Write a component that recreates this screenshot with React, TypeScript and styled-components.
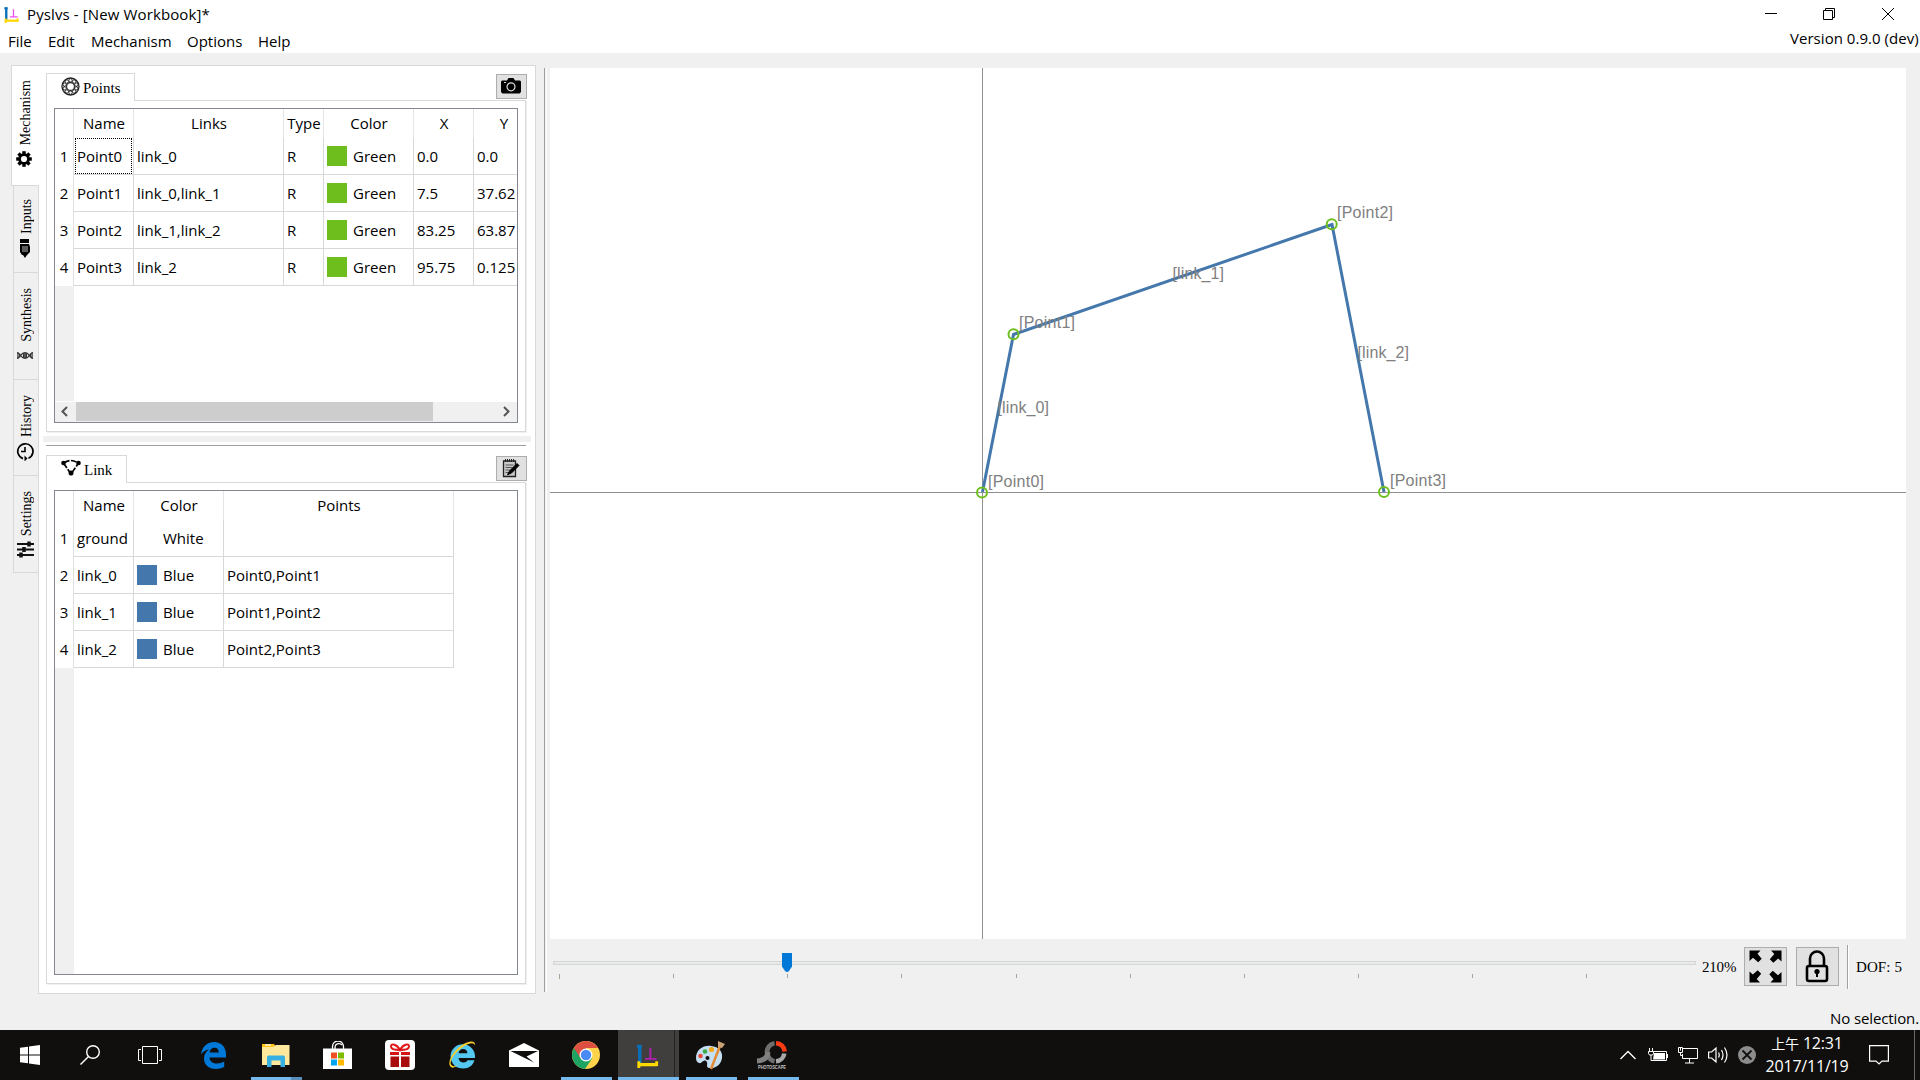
import React from "react";
import styled, { createGlobalStyle, css } from "styled-components";

const GlobalStyle = createGlobalStyle`
  * { box-sizing: border-box; }
  html, body { margin: 0; padding: 0; }
  body { width: 1920px; height: 1080px; overflow: hidden; background: #f0f0f0; }
  svg { display: block; flex: none; }
`;

const uiFont = css`
  font-family: "Open Sans", "Noto Sans", sans-serif;
  font-size: 15px;
  color: #000;
  white-space: nowrap;
`;
const serifFont = css`
  font-family: "Liberation Serif", serif;
  font-size: 15px;
  color: #000;
  white-space: nowrap;
`;

const Window = styled.div`
  width: 1920px;
  height: 1080px;
  display: flex;
  flex-direction: column;
  background: #f0f0f0;
  overflow: hidden;
`;
const Top = styled.header`
  height: 53px;
  background: #fff;
  display: flex;
  justify-content: space-between;
  ${uiFont}
`;
const TopLeft = styled.div`
  display: flex;
  flex-direction: column;
`;
const TitleRow = styled.div`
  display: flex;
  height: 30px;
  align-items: center;
  padding: 0 0 2px 3px;
  gap: 7px;
`;
const Txt = styled.span<{ $ls?: number }>`
  letter-spacing: ${(p) => p.$ls ?? 0}px;
`;
const Menu = styled.nav`
  display: flex;
  height: 23px;
  line-height: 22px;
  padding-left: 8px;
`;
const MenuItem = styled.span<{ $w: number }>`
  width: ${(p) => p.$w}px;
`;
const TopRight = styled.div`
  width: 200px;
  display: flex;
  flex-direction: column;
`;
const Controls = styled.div`
  height: 28px;
  display: flex;
  padding: 8px 0 0 45px;
  gap: 46px;
`;
const Version = styled.div`
  padding-left: 70px;
  line-height: 21px;
  letter-spacing: 0.04px;
`;

const Body = styled.main`
  flex: 1;
  display: flex;
  padding-top: 12px;
`;
const SideTabs = styled.div`
  width: 38px;
  padding-left: 11px;
  display: flex;
  flex-direction: column;
  align-items: flex-end;
`;
const SideTab = styled.div<{ $h: number; $active?: boolean; $b: number; $gap: number }>`
  position: relative;
  z-index: 1;
  width: ${(p) => (p.$active ? 28 : 25)}px;
  height: ${(p) => p.$h}px;
  margin-right: ${(p) => (p.$active ? -1 : 0)}px;
  background: ${(p) => (p.$active ? "#fff" : "#f0f0f0")};
  border: 1px solid #d9d9d9;
  border-right: 0;
  border-top-width: ${(p) => (p.$active ? 1 : 0)}px;
  display: flex;
  flex-direction: column;
  align-items: center;
  justify-content: flex-end;
  gap: ${(p) => p.$gap}px;
  padding-bottom: ${(p) => p.$b}px;
  padding-right: ${(p) => (p.$active ? 3 : 2)}px;
`;
const VText = styled.span<{ $ls?: number }>`
  ${serifFont}
  font-size: 14px;
  writing-mode: vertical-rl;
  transform: rotate(180deg);
  line-height: 18px;
  margin-left: 3px;
  letter-spacing: ${(p) => p.$ls ?? 0}px;
`;
const Pane = styled.section`
  width: 498px;
  height: 929px;
  background: #fff;
  border: 1px solid #d9d9d9;
  padding: 7px 4px 0;
  display: flex;
  flex-direction: column;
`;
const Group = styled.div`
  width: 482px;
  margin-left: 3px;
`;
const TabRow = styled.div`
  height: 28px;
  display: flex;
  justify-content: space-between;
`;
const Tab = styled.div<{ $w: number }>`
  position: relative;
  z-index: 1;
  width: ${(p) => p.$w}px;
  height: 28px;
  background: #fff;
  border: 1px solid #d9d9d9;
  border-bottom: 0;
  display: flex;
  align-items: flex-start;
  padding: 3px 0 0 14px;
  gap: 3px;
  ${serifFont}
  line-height: 23px;
`;
const ToolButton = styled.div`
  position: relative;
  z-index: 1;
  width: 31px;
  height: 25px;
  margin: 1px 1px 0 0;
  padding: 0 1px 1px 0;
  background: #e1e1e1;
  border: 1px solid #adadad;
  display: grid;
  place-items: center;
`;
const Frame = styled.div<{ $h: number }>`
  width: 480px;
  height: ${(p) => p.$h}px;
  margin-top: -1px;
  border: 1px solid #d9d9d9;
  box-shadow: 1px 1px 0 0 #f0f0f0;
  padding: 7px;
  background: #fff;
`;
const TableBox = styled.div<{ $h: number }>`
  width: 464px;
  height: ${(p) => p.$h}px;
  border: 1px solid #828790;
  display: flex;
  flex-direction: column;
  overflow: hidden;
  ${uiFont}
`;
const Row = styled.div<{ $h: number }>`
  display: flex;
  flex: none;
  height: ${(p) => p.$h}px;
`;
const Num = styled.div`
  flex: none;
  width: 19px;
  border-right: 1px solid #e0e0e0;
  padding-bottom: 1px;
  display: flex;
  align-items: center;
  justify-content: center;
`;
const Cell = styled.div<{ $w: number; $head?: boolean }>`
  flex: none;
  width: ${(p) => p.$w}px;
  border-right: 1px solid ${(p) => (p.$head ? "#e5e5e5" : "#d8d8d8")};
  border-bottom: ${(p) => (p.$head ? "0" : "1px solid #d8d8d8")};
  display: flex;
  align-items: center;
  justify-content: ${(p) => (p.$head ? "center" : "flex-start")};
  padding-left: ${(p) => (p.$head ? 1 : 3)}px;
  padding-bottom: ${(p) => (p.$head ? 1 : 0)}px;
`;
const Focus = styled.div`
  display: flex;
  align-items: center;
  flex: none;
  width: 57px;
  height: 36px;
  margin-left: -2px;
  padding-left: 1px;
  border: 1px dotted #000;
`;
const Swatch = styled.span<{ $c: string }>`
  width: 20px;
  height: 20px;
  margin: -1px 6px 0 0;
  background: ${(p) => p.$c};
`;
const HeaderFill = styled.div`
  flex: 1;
  width: 19px;
  background: #f0f0f0;
`;
const ScrollBar = styled.div`
  height: 20px;
  margin-top: 1px;
  background: #f0f0f0;
  display: flex;
  align-items: center;
  padding: 0 6px 1px;
`;
const Thumb = styled.div`
  width: 357px;
  height: 19px;
  margin: 0 70px 0 8px;
  background: #cdcdcd;
`;
const HSplit = styled.div`
  height: 6px;
  margin: 4px 0 3px;
  background: #f0f0f0;
`;
const HLine = styled.div`
  height: 1px;
  width: 480px;
  margin: 0 0 9px 3px;
  background: #a0a0a0;
`;
const VSplit = styled.div`
  width: 3px;
  height: 924px;
  margin: 3px 3px 0 8px;
  border-left: 1px solid #a0a0a0;
  border-right: 1px solid #fff;
`;
const Right = styled.section`
  flex: 1;
  padding-top: 3px;
  display: flex;
  flex-direction: column;
`;
const Canvas = styled.svg`
  width: 1356px;
  height: 871px;
  background: #fff;
`;
const ZoomRow = styled.div`
  height: 53px;
  display: flex;
  align-items: flex-start;
  padding: 6px 0 0 3px;
  ${serifFont}
`;
const Label = styled.span<{ $w: number; $ls?: number }>`
  width: ${(p) => p.$w}px;
  line-height: 44px;
  letter-spacing: ${(p) => p.$ls ?? 0}px;
`;
const BigButton = styled.div`
  width: 43px;
  height: 39px;
  margin: 2px 9px 0 0;
  padding-right: 1px;
  background: #e1e1e1;
  border: 1px solid #adadad;
  display: grid;
  place-items: center;
`;
const Divider = styled.div`
  width: 2px;
  height: 44px;
  margin: 0 7px 0 -1px;
  border-left: 1px solid #a0a0a0;
  border-right: 1px solid #fff;
`;
const Status = styled.div`
  flex: 1;
  display: flex;
  justify-content: flex-end;
  align-items: center;
  padding: 13px 1px 0 0;
  letter-spacing: -0.12px;
  ${uiFont}
`;
const Taskbar = styled.footer`
  height: 50px;
  background: #100f0e;
  display: flex;
  justify-content: space-between;
`;
const Tasks = styled.div`
  display: flex;
`;
const Task = styled.div<{ $w: number; $ml?: number; $open?: boolean; $active?: boolean; $multi?: boolean }>`
  width: ${(p) => p.$w}px;
  margin-left: ${(p) => p.$ml ?? 0}px;
  height: 50px;
  display: flex;
  flex-direction: column;
  align-items: center;
  background: ${(p) =>
    p.$active ? "linear-gradient(90deg,#403f3e 0 56px,#222 56px 57px,#403f3e 57px)" : "none"};
  &::after {
    content: "";
    height: 3px;
    width: ${(p) => (p.$active ? "100%" : "51px")};
    background: ${(p) =>
      p.$multi ? "linear-gradient(90deg,#76b9ed 0 40px,#5a8fb9 40px)" : p.$open ? "#76b9ed" : "none"};
  }
`;
const TaskIcon = styled.div<{ $shift?: number }>`
  height: 47px;
  display: grid;
  place-items: center;
  padding: 3px ${(p) => p.$shift ?? 0}px 0 0;
`;
const Tray = styled.div`
  display: flex;
  align-items: center;
  width: 302px;
`;
const TrayIcon = styled.div<{ $w: number }>`
  flex: none;
  width: ${(p) => p.$w}px;
  display: grid;
  place-items: center;
`;
const Clock = styled.div`
  flex: none;
  width: 88px;
  margin: 0 0 2px 7px;
  text-align: center;
  color: #fff;
  white-space: nowrap;
  font: 16px/22px "Open Sans", "Noto Sans CJK TC", sans-serif;
  letter-spacing: -0.2px;
`;
const Meridiem = styled.span`
  font-size: 14px;
`;
const Peek = styled.div`
  width: 6px;
  height: 50px;
  margin-left: 7px;
  border-left: 1px solid #6a6a6a;
`;

const Logo = ({ s, p = "#d81bd8" }: { s: number; p?: string }) => (
  <svg width={s} height={s} viewBox="0 0 24 26">
    <path d="M4 2v19" stroke="#0870b8" strokeWidth="3.600" />
    <path d="M1 3.500h5" stroke="#0870b8" strokeWidth="3" />
    <path d="M2 22.500h20" stroke="#ffd800" strokeWidth="3.400" />
    <path d="M3 19v7M21.500 19v5" stroke="#ffd800" strokeWidth="3" />
    <path d="M15 5v12M9.500 16.500h12" stroke={p} strokeWidth="2" />
  </svg>
);

const GearIcon = () => (
  <svg width="16" height="16" viewBox="-8 -8 16 16">
    {[0, 45, 90, 135].map((a) => (
      <rect key={a} x="-1.700" y="-7.800" width="3.400" height="15.600" transform={`rotate(${a})`} />
    ))}
    <circle r="5.800" />
    <circle r="3.100" fill="#fff" />
  </svg>
);
const PencilIcon = () => (
  <svg width="12" height="19" viewBox="0 0 12 19">
    <path d="M1 0h9v4H1zM1 5h9l1 3v5l-3 3H3l-2-3z" />
    <path d="M4 7v6M6 7v6M8 7v6" stroke="#bbb" />
    <path d="M4 16l2 3 2-3z" />
  </svg>
);
const DnaIcon = () => (
  <svg width="16" height="9" viewBox="0 0 17 9" fill="none" stroke="#333" strokeWidth="1.300">
    <path d="M0 1.500C3 1.500 4 7.500 8.500 7.500S14 1.500 17 1.500M0 7.500C3 7.500 4 1.500 8.500 1.500S14 7.500 17 7.500" />
    <path d="M1 1v7M2.800 2.500v4M7 2v5.500M8.500 1.500v6M10 2v5.500M14.200 2.500v4M16 1v7" />
  </svg>
);
const HistoryIcon = () => (
  <svg width="18" height="19" viewBox="0 0 18 19" fill="none" stroke="#000">
    <path d="M7 16.600A7.600 7.600 0 1 1 12.500 16.300" strokeWidth="1.700" />
    <path d="M9 5v5M9.700 9.500H5" strokeWidth="1.600" />
    <path d="M8.500 13.500l3 3-3 3z" fill="#000" stroke="none" />
  </svg>
);
const SlidersIcon = () => (
  <svg width="17" height="17" viewBox="0 0 17 17" stroke="#111">
    <path d="M0 3h17M0 8.500h17M0 14h17" strokeWidth="2" />
    <path d="M12 .5v5M7 6v5M4 11.500v5" strokeWidth="3.500" />
  </svg>
);
const BearingIcon = () => (
  <svg width="19" height="19" viewBox="-9.500 -9.500 19 19" fill="none" stroke="#222">
    <circle r="8.500" strokeWidth="1.300" />
    <circle r="3.900" strokeWidth="1.100" />
    {Array.from({ length: 10 }, (_, i) => (
      <circle key={i} cx="0" cy="-6.200" r="1.700" strokeWidth=".9" transform={`rotate(${i * 36})`} />
    ))}
  </svg>
);
const LinkIcon = () => (
  <svg width="20" height="17" viewBox="0 0 20 17">
    <path d="M3 4Q10-1 17 4M2.500 4L10 15 17.500 4" fill="none" stroke="#000" strokeWidth="1.700" strokeDasharray="6 1.500" />
    <circle cx="2.500" cy="4" r="2.300" />
    <circle cx="17.500" cy="4" r="2.300" />
    <circle cx="10" cy="14" r="2.500" />
  </svg>
);
const CameraIcon = () => (
  <svg width="20" height="16" viewBox="0 0 20 16">
    <path d="M1 2.500h5L7.500 0h5L14 2.500h5l1 1V14l-1.500 1.500h-17L0 14V3.500z" />
    <circle cx="10" cy="8.800" r="4" fill="none" stroke="#ddd" strokeWidth="1.200" />
    <path d="M3 4.500h2" stroke="#ddd" />
  </svg>
);
const EditIcon = () => (
  <svg width="18" height="19" viewBox="0 0 18 19">
    <path d="M1.500 2h12v15.500h-12z" fill="#c9c9c9" stroke="#222" strokeWidth="1.300" />
    <path d="M3.500 0v3M5.500 0v3M7.500 0v3M9.500 0v3M11.500 0v3" stroke="#222" />
    <path d="M3.500 6h8M3.500 8.500h7M3.500 11h5M3.500 13.500h3" stroke="#555" />
    <path d="M15 4.500l2 2L9.500 14l-4 1.800L7.500 12z" stroke="#000" />
  </svg>
);
const ExpandIcon = () => (
  <svg width="33" height="33" viewBox="-16.500 -16.500 33 33">
    {[0, 90, 180, 270].map((a) => (
      <path key={a} transform={`rotate(${a})`} d="M-16-16h11l-3 3.300 4.200 4.900-3.500 3.500-5.200-4.500-3.500 3.300z" />
    ))}
  </svg>
);
const LockIcon = () => (
  <svg width="24" height="33" viewBox="0 0 24 33" fill="none" stroke="#000" strokeWidth="2.600">
    <rect x="2" y="16" width="20" height="15" rx="2" />
    <path d="M5 16V8.500a7 7 0 0 1 14 0V16" />
    <circle cx="12" cy="21.500" r="2.600" fill="#000" stroke="none" />
    <path d="M12 22v5" strokeWidth="2" />
  </svg>
);

const GREEN = "#6ebe1e";
const BLUE = "#4478ad";

const pointCols: [string, number][] = [["Name", 60], ["Links", 150], ["Type", 40], ["Color", 90], ["X", 60], ["Y", 60]];
const points = [
  ["Point0", "link_0", "0.0", "0.0"],
  ["Point1", "link_0,link_1", "7.5", "37.62"],
  ["Point2", "link_1,link_2", "83.25", "63.87"],
  ["Point3", "link_2", "95.75", "0.125"],
];
const linkCols: [string, number][] = [["Name", 60], ["Color", 90], ["Points", 230]];
const links = [
  ["ground", "White", ""],
  ["link_0", "Blue", "Point0,Point1"],
  ["link_1", "Blue", "Point1,Point2"],
  ["link_2", "Blue", "Point2,Point3"],
];
const labels: [string, number, number, number][] = [
  ["[Point0]", 438, 419, 56],
  ["[Point1]", 469, 260, 56],
  ["[Point2]", 787, 150, 56],
  ["[Point3]", 840, 418, 56],
  ["[link_0]", 447.500, 345, 51.500],
  ["[link_1]", 622.500, 211, 51.500],
  ["[link_2]", 807.500, 290, 51.500],
];
const joints = [[432, 424.500], [463.500, 266.300], [781.700, 156.200], [834, 424]];

const Arrow = ({ d }: { d: string }) => (
  <svg width="7" height="11" viewBox="0 0 7 11" fill="none" stroke="#555" strokeWidth="2">
    <path d={d} />
  </svg>
);

const Drawing = () => (
  <Canvas viewBox="0 0 1356 871">
    <path d="M432.500 0V871M0 424.500H1356" stroke="#909090" shapeRendering="crispEdges" />
    <path d="M432.500 424L463.500 266.500 782 156.500 834 424" fill="none" stroke={BLUE} strokeWidth="3" />
    {joints.map(([x, y]) => (
      <circle key={x} cx={x} cy={y} r="5" fill="none" stroke={GREEN} strokeWidth="2" />
    ))}
    {labels.map(([t, x, y, w]) => (
      <text key={t} x={x} y={y} textLength={w} fontFamily="Liberation Sans, Arial, sans-serif" fontSize="16" fill="#808080">
        {t}
      </text>
    ))}
  </Canvas>
);

const Slider = () => (
  <svg width="1149" height="40" viewBox="0 0 1149 40">
    <rect x=".5" y="16.500" width="1142" height="3" fill="#e7eaea" stroke="#d6d6d6" />
    {Array.from({ length: 10 }, (_, i) => (
      <rect key={i} x={Math.round(6 + i * 114.150)} y="29" width="1" height={i === 0 ? 5 : 4} fill="#a5a593" />
    ))}
    <path d="M229 8h10v13.500l-3 4.500q-2 2-4 0L229 21.500z" fill="#0078d7" />
  </svg>
);

export default function App() {
  return (
    <Window>
      <GlobalStyle />
      <Top>
        <TopLeft>
          <TitleRow>
            <Logo s={17} p="#f050f0" />
            <Txt $ls={0.12}>Pyslvs - [New Workbook]*</Txt>
          </TitleRow>
          <Menu>
            <MenuItem $w={40}>File</MenuItem>
            <MenuItem $w={43}>Edit</MenuItem>
            <MenuItem $w={96}>Mechanism</MenuItem>
            <MenuItem $w={71}>Options</MenuItem>
            <MenuItem $w={50}>Help</MenuItem>
          </Menu>
        </TopLeft>
        <TopRight>
          <Controls>
            <svg width="12" height="12" viewBox="0 0 12 12" stroke="#000"><path d="M0 5.500h12" /></svg>
            <svg width="12" height="12" viewBox="0 0 12 12" stroke="#000" fill="none"><path d="M.5 2.500h9v9h-9zM2.500 2.500v-2h9v9h-2" /></svg>
            <svg width="13" height="12" viewBox="0 0 13 12" stroke="#000"><path d="M1 0l12 12M13 0L1 12" /></svg>
          </Controls>
          <Version>Version 0.9.0 (dev)</Version>
        </TopRight>
      </Top>

      <Body>
        <SideTabs>
          <SideTab $h={121} $active $b={18} $gap={6}><VText>Mechanism</VText><GearIcon /></SideTab>
          <SideTab $h={87} $b={14} $gap={5}><VText>Inputs</VText><PencilIcon /></SideTab>
          <SideTab $h={107} $b={19} $gap={9}><VText>Synthesis</VText><DnaIcon /></SideTab>
          <SideTab $h={96} $b={14} $gap={5}><VText>History</VText><HistoryIcon /></SideTab>
          <SideTab $h={97} $b={14} $gap={5}><VText>Settings</VText><SlidersIcon /></SideTab>
        </SideTabs>
        <Pane>
          <Group>
            <TabRow>
              <Tab $w={89}><BearingIcon />Points</Tab>
              <ToolButton><CameraIcon /></ToolButton>
            </TabRow>
            <Frame $h={332}>
              <TableBox $h={315}>
                <Row $h={29}>
                  <Num />
                  {pointCols.map(([t, w]) => <Cell key={t} $w={w} $head>{t}</Cell>)}
                </Row>
                {points.map((r, i) => (
                  <Row $h={37} key={r[0]}>
                    <Num>{i + 1}</Num>
                    <Cell $w={60}>{i === 0 ? <Focus>{r[0]}</Focus> : r[0]}</Cell>
                    <Cell $w={150}>{r[1]}</Cell>
                    <Cell $w={40}>R</Cell>
                    <Cell $w={90}><Swatch $c={GREEN} />Green</Cell>
                    <Cell $w={60}>{r[2]}</Cell>
                    <Cell $w={60}>{r[3]}</Cell>
                  </Row>
                ))}
                <HeaderFill />
                <ScrollBar>
                  <Arrow d="M6 1L1.500 5.500 6 10" />
                  <Thumb />
                  <Arrow d="M1 1l4.500 4.500L1 10" />
                </ScrollBar>
              </TableBox>
            </Frame>
          </Group>
          <HSplit />
          <HLine />
          <Group>
            <TabRow>
              <Tab $w={81}><LinkIcon />Link</Tab>
              <ToolButton><EditIcon /></ToolButton>
            </TabRow>
            <Frame $h={502}>
              <TableBox $h={485}>
                <Row $h={29}>
                  <Num />
                  {linkCols.map(([t, w]) => <Cell key={t} $w={w} $head>{t}</Cell>)}
                </Row>
                {links.map((r, i) => (
                  <Row $h={37} key={r[0]}>
                    <Num>{i + 1}</Num>
                    <Cell $w={60}>{r[0]}</Cell>
                    <Cell $w={90}><Swatch $c={i ? BLUE : "#fff"} />{r[1]}</Cell>
                    <Cell $w={230}>{r[2]}</Cell>
                  </Row>
                ))}
                <HeaderFill />
              </TableBox>
            </Frame>
          </Group>
        </Pane>
        <VSplit />
        <Right>
          <Drawing />
          <ZoomRow>
            <Slider />
            <Label $w={42} $ls={-0.2}>210%</Label>
            <BigButton><ExpandIcon /></BigButton>
            <BigButton><LockIcon /></BigButton>
            <Divider />
            <Label $w={50} $ls={0.1}>DOF: 5</Label>
          </ZoomRow>
          <Status>No selection.</Status>
        </Right>
      </Body>

      <Taskbar>
        <Tasks>
          <Task $w={60}><TaskIcon>
            <svg width="20" height="20" viewBox="0 0 20 20" fill="#fff"><path d="M0 2.800l8-1.100V9.500H0zM9 1.500L20 0v9.500H9zM0 10.500h8v7.800l-8-1.100zM9 10.500h11V20L9 18.500z" /></svg>
          </TaskIcon></Task>
          <Task $w={60}><TaskIcon>
            <svg width="20" height="20" viewBox="0 0 20 20" fill="none" stroke="#fff" strokeWidth="1.400"><circle cx="13" cy="7" r="6.300" /><path d="M8.500 11.500L.5 19.500" /></svg>
          </TaskIcon></Task>
          <Task $w={60}><TaskIcon>
            <svg width="24" height="18" viewBox="0 0 24 18" fill="none" stroke="#fff"><path d="M4.500.5h15v17h-15zM3 3.500H.5v11H3M21 3.500h2.500v11H21" /></svg>
          </TaskIcon></Task>
          <Task $w={62} $ml={3}><TaskIcon $shift={1}>
            <svg width="25" height="27" viewBox="0 0 25 27" fill="#0078d7"><path d="M0 12.500C.8 5 6 0 13 0c7.500 0 12 5.500 12 12v3.500H8.500c.3 4 3.500 6 7.500 6 2.700 0 5-.8 7.200-2V25c-2.500 1.300-5.200 2-8.200 2C7.500 27 3 22.500 3 16.500c0-3.700 2-7 5.200-9C4.500 8 1.800 9.700 0 12.500zM8.600 10.500h9.200c0-3-1.600-4.700-4.300-4.700-2.600 0-4.500 1.900-4.900 4.700z" /></svg>
          </TaskIcon></Task>
          <Task $w={62} $open $multi><TaskIcon>
            <svg width="28" height="24" viewBox="0 0 28 24"><path d="M0 1h12l2 3H0z" fill="#fcc419" /><path d="M0 4h11l3-2h13.500v20H0z" fill="#ffe79b" /><path d="M3 2h6" stroke="#fff" strokeWidth="1.200" /><path d="M5 24V14q0-1.500 1.500-1.500h15q1.500 0 1.500 1.500v10h-4.500v-6.500h-9V24z" fill="#36b0e3" /></svg>
          </TaskIcon></Task>
          <Task $w={62}><TaskIcon $shift={1}>
            <svg width="29" height="28" viewBox="0 0 29 28"><path d="M9.500 8V5.500a5.500 5.500 0 0 1 11 0V8M12 8V6a4 4 0 0 1 7-2" stroke="#fff" strokeWidth="1.300" fill="none" /><path d="M0 7.500h29V28H0z" fill="#fff" /><path d="M8 11.500h6v6H8z" fill="#f25022" /><path d="M15 11.500h6v6h-6z" fill="#7fba00" /><path d="M8 18.500h6v6H8z" fill="#00a4ef" /><path d="M15 18.500h6v6h-6z" fill="#ffb900" /></svg>
          </TaskIcon></Task>
          <Task $w={62}><TaskIcon>
            <svg width="30" height="30" viewBox="0 0 30 30"><rect width="30" height="30" rx="4" fill="#fff" /><path d="M5 12h9v3H5zM16 12h9v3h-9z" fill="#d31515" /><path d="M5.500 16.500H14V27H5.500zM16 16.500h8.500V27H16z" fill="#a80c0c" /><path d="M15 10C12 4 6 3 6 6.500S12 10 15 10s9 0 9-3.500S18 4 15 10z" fill="none" stroke="#e01818" strokeWidth="2" /></svg>
          </TaskIcon></Task>
          <Task $w={62}><TaskIcon $shift={1}>
            <svg width="30" height="30" viewBox="0 0 30 30"><path d="M3.500 15.500A12.300 12.300 0 0 1 28 15.500V18H11.500c.4 3.300 2.500 4.500 5 4.500 2 0 3.300-.8 4-2.200h7C25.800 25.500 22 28.500 16.500 28.500 9 28.500 3.500 24 3.500 15.500zM11.500 13.300h9c-.3-2.800-1.900-4.300-4.400-4.300-2.600 0-4.200 1.600-4.600 4.300z" fill="#54c8f0" /><path d="M4 27C-1 23 6 11 15 5 22 .5 29 0 28 6c-.2-4-5-3.500-11.500.5C8 12 2 21 4 24.500q2 3 7 .5Q6 29 4 27z" fill="#f8cf28" /></svg>
          </TaskIcon></Task>
          <Task $w={62}><TaskIcon>
            <svg width="30" height="24" viewBox="0 0 30 24"><path d="M0 7.500L15 0l15 7.500V24H0z" fill="#fff" /><path d="M1.500 8h27.500L17.500 13.500 25 19.500z" fill="#100f0e" /></svg>
          </TaskIcon></Task>
          <Task $w={62} $open><TaskIcon $shift={1}>
            <svg width="28" height="28" viewBox="-14 -14 28 28"><circle r="14" fill="#ffd24c" /><path d="M-12.100-7A14 14 0 0 0-1 14L6 3.500 0 0z" fill="#1da462" /><path d="M-12.100-7L-5.500 3 0 0 0-7H12.100A14 14 0 0 0-12.100-7z" fill="#dd4f43" /><circle r="6.500" fill="#fff" /><circle r="5.200" fill="#4a8af4" /></svg>
          </TaskIcon></Task>
          <Task $w={61} $ml={1} $open $active><TaskIcon $shift={2}><Logo s={25} p="#b020b0" /></TaskIcon></Task>
          <Task $w={62} $ml={1} $open><TaskIcon $shift={2}>
            <svg width="30" height="29" viewBox="0 0 30 29"><path d="M1 17C1 9 8 4 16 5c8 .5 12 6 11 12-1 7-7 11-13 10-4-1 0-5-3-7s-4 3-7 2q-3-1-3-5z" fill="#c4dff2" /><circle cx="5.500" cy="15" r="2.300" fill="#e84b38" /><circle cx="10" cy="10.500" r="2.300" fill="#3caa46" /><circle cx="16.500" cy="8.500" r="2.600" fill="#f7a81b" /><circle cx="12.500" cy="17" r="2" fill="#100f0e" /><path d="M25 5L16 28" stroke="#e28a35" strokeWidth="2.500" /><path d="M23 0l7 3-3 4-4-1z" fill="#c9a27a" /></svg>
          </TaskIcon></Task>
          <Task $w={62} $open><TaskIcon $shift={2}>
            <svg width="32" height="32" viewBox="-1 -1 32 32" fill="none">
              <path d="M19 3.200a8.800 8.800 0 0 1 8.700 8.300" stroke="#ff3b14" strokeWidth="4.600" />
              <path d="M27.300 13.500A9 9 0 0 1 19 21.300" stroke="#a8a8a8" strokeWidth="4.600" />
              <path d="M17.500 3.200A9 9 0 0 0 10.500 15Q13 20.500 17.500 21.300" stroke="#6e6e6e" strokeWidth="4.600" />
              <path d="M11 12Q10.500 20.500 0 21" stroke="#808080" strokeWidth="5" />
              <text x="1" y="29" textLength="28" lengthAdjust="spacingAndGlyphs" fontFamily="Liberation Sans" fontWeight="700" fontSize="5.500" fill="#c4c4c4">PHOTOSCAPE</text>
            </svg>
          </TaskIcon></Task>
        </Tasks>
        <Tray>
          <TrayIcon $w={20}><svg width="16" height="10" viewBox="0 0 16 10" fill="none" stroke="#fff" strokeWidth="1.300"><path d="M.5 9L8 1.500 15.500 9" /></svg></TrayIcon>
          <TrayIcon $w={40}><svg width="20" height="14" viewBox="0 0 20 14"><path d="M5.500 3.500h13v9h-13" stroke="#fff" fill="none" /><path d="M6 5h11v6.500H5zM18.500 6H20v4h-1.500z" fill="#fff" /><path d="M1.500 0v3M4.500 0v3M.5 3.500h5v2l-1 1.500h-3L.5 5.500zM3 7v5.500h3" stroke="#fff" fill="none" /></svg></TrayIcon>
          <TrayIcon $w={20}><svg width="20" height="17" viewBox="0 0 20 17" fill="none" stroke="#fff"><path d="M5 1.500h14.500v10h-15V7M.5.500h4v5h-4zM2.500 6v2.500H5M11.500 12v4M7 16h9M2.500.5v3" /></svg></TrayIcon>
          <TrayIcon $w={40}><svg width="20" height="18" viewBox="0 0 20 18" fill="none" stroke="#fff" strokeWidth="1.200"><path d="M.6 6h3L8 2v14L3.600 12h-3zM10.500 6.500q1.500 2.500 0 5M13.500 4q3 5 0 10M16.500 1.500q5 7.500 0 15" /></svg></TrayIcon>
          <TrayIcon $w={18}><svg width="18" height="18" viewBox="0 0 18 18"><circle cx="9" cy="9" r="9" fill="#8c8c8c" /><path d="M4.500 4.500l9 9M13.500 4.500l-9 9" stroke="#111" strokeWidth="1.800" /></svg></TrayIcon>
          <Clock><Meridiem>上午</Meridiem> 12:31<br />2017/11/19</Clock>
          <TrayIcon $w={56}><svg width="20" height="20" viewBox="0 0 20 20" fill="none" stroke="#fff" strokeWidth="1.200"><path d="M.6.6h18.800v15.500H13L10 19l-3-2.900H.6z" /></svg></TrayIcon>
          <Peek />
        </Tray>
      </Taskbar>
    </Window>
  );
}
